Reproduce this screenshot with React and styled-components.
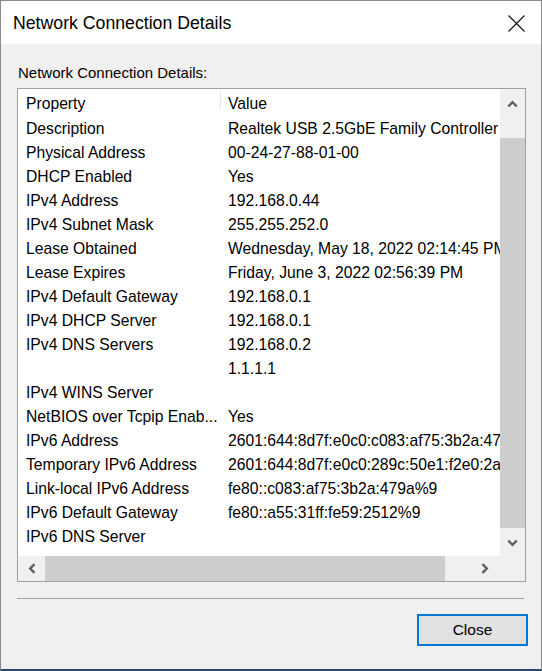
import React from 'react'
import styled, { createGlobalStyle } from 'styled-components'

const GlobalStyle = createGlobalStyle`
  html, body {
    margin: 0;
    padding: 0;
    background: #f0f0f0;
  }
  body {
    font-family: "Liberation Sans", Arial, sans-serif;
    color: #000;
  }
`

const rows = [
  ['Description', 'Realtek USB 2.5GbE Family Controller'],
  ['Physical Address', '00-24-27-88-01-00'],
  ['DHCP Enabled', 'Yes'],
  ['IPv4 Address', '192.168.0.44'],
  ['IPv4 Subnet Mask', '255.255.252.0'],
  ['Lease Obtained', 'Wednesday, May 18, 2022 02:14:45 PM'],
  ['Lease Expires', 'Friday, June 3, 2022 02:56:39 PM'],
  ['IPv4 Default Gateway', '192.168.0.1'],
  ['IPv4 DHCP Server', '192.168.0.1'],
  ['IPv4 DNS Servers', '192.168.0.2'],
  ['', '1.1.1.1'],
  ['IPv4 WINS Server', ''],
  ['NetBIOS over Tcpip Enab...', 'Yes'],
  ['IPv6 Address', '2601:644:8d7f:e0c0:c083:af75:3b2a:479a'],
  ['Temporary IPv6 Address', '2601:644:8d7f:e0c0:289c:50e1:f2e0:2a6c'],
  ['Link-local IPv6 Address', 'fe80::c083:af75:3b2a:479a%9'],
  ['IPv6 Default Gateway', 'fe80::a55:31ff:fe59:2512%9'],
  ['IPv6 DNS Server', ''],
]

const Chevron = ({ dir }) => {
  const paths = {
    up: 'M1.2 6.5 L5.5 2.2 L9.8 6.5',
    down: 'M1.2 1.5 L5.5 5.8 L9.8 1.5',
    left: 'M6.5 1.2 L2.2 5.5 L6.5 9.8',
    right: 'M1.5 1.2 L5.8 5.5 L1.5 9.8',
  }
  const vertical = dir === 'up' || dir === 'down'
  return (
    <svg width={vertical ? 11 : 8} height={vertical ? 8 : 11} viewBox={vertical ? '0 0 11 8' : '0 0 8 11'}>
      <path d={paths[dir]} fill="none" stroke="#606060" strokeWidth="2.4" />
    </svg>
  )
}

const App = () => {
  return (
    <>
      <GlobalStyle />
      <Window>
        <TitleBar>
          <Title>Network Connection Details</Title>
          <CloseX>
            <svg width="17" height="17" viewBox="0 0 17 17">
              <path d="M0.5 0.5 L16.5 16.5 M16.5 0.5 L0.5 16.5" stroke="#111" strokeWidth="1.1" />
            </svg>
          </CloseX>
        </TitleBar>
        <Body>
          <Label>Network Connection Details:</Label>
          <ListBox>
            <ListMain>
              <Content>
                <HeaderRow>
                  <HeaderCell $divider>Property</HeaderCell>
                  <HeaderCell>Value</HeaderCell>
                </HeaderRow>
                {rows.map(([k, v], i) => (
                  <Row key={i}>
                    <PropCell>{k}</PropCell>
                    <ValueCell>{v}</ValueCell>
                  </Row>
                ))}
              </Content>
              <VScroll>
                <ArrowButton $h={30}><Chevron dir="up" /></ArrowButton>
                <VTrack>
                  <VThumb />
                </VTrack>
                <ArrowButton $h={27}><Chevron dir="down" /></ArrowButton>
              </VScroll>
            </ListMain>
            <HScrollRow>
              <HScroll>
                <ArrowButton $w={27}><Chevron dir="left" /></ArrowButton>
                <HTrack>
                  <HThumb />
                </HTrack>
                <ArrowButton $w={30}><Chevron dir="right" /></ArrowButton>
              </HScroll>
              <Corner />
            </HScrollRow>
          </ListBox>
          <Separator />
          <ButtonRow>
            <Button>Close</Button>
          </ButtonRow>
        </Body>
      </Window>
    </>
  )
}

export default App

const Window = styled.div`
  width: 542px;
  height: 671px;
  box-sizing: border-box;
  border: 1px solid #8a8a8a;
  border-bottom: 2px solid #2b4a6b;
  display: flex;
  flex-direction: column;
  background: #f0f0f0;
  overflow: hidden;
`

const TitleBar = styled.div`
  height: 43px;
  flex: none;
  background: #fff;
  display: flex;
  align-items: center;
  justify-content: space-between;
  padding-left: 12px;
`

const Title = styled.div`
  font-size: 17.7px;
  line-height: 20px;
  margin-top: 1px;
`

const CloseX = styled.div`
  width: 47px;
  height: 43px;
  display: flex;
  align-items: center;
  justify-content: center;
  margin-right: 1px;
  margin-top: 1px;
`

const Body = styled.div`
  flex: 1;
  display: flex;
  flex-direction: column;
  padding: 0 15px 0 16px;
`

const Label = styled.div`
  margin-top: 20px;
  padding-left: 1px;
  font-size: 15px;
  line-height: 18px;
  height: 18px;
`

const ListBox = styled.div`
  margin-top: 6px;
  width: 509px;
  height: 494px;
  box-sizing: border-box;
  border: 1px solid #a0a0a0;
  background: #fff;
  display: flex;
  flex-direction: column;
`

const ListMain = styled.div`
  flex: 1;
  display: flex;
  min-height: 0;
`

const Content = styled.div`
  flex: 1;
  overflow: hidden;
  white-space: nowrap;
  font-size: 15.7px;
  padding-top: 1px;
`

const HeaderRow = styled.div`
  display: flex;
  height: 27px;
  align-items: center;
`

const HeaderCell = styled.div`
  position: relative;
  height: 100%;
  display: flex;
  align-items: center;
  width: ${p => (p.$divider ? '203px' : 'auto')};
  padding-left: ${p => (p.$divider ? '8px' : '7px')};
  box-sizing: border-box;
  flex: none;

  &::after {
    content: '';
    display: ${p => (p.$divider ? 'block' : 'none')};
    position: absolute;
    right: 0;
    top: 0;
    width: 1px;
    height: 18px;
    background: #e5e5e5;
  }
`

const Row = styled.div`
  display: flex;
  height: 24px;
  align-items: center;
`

const PropCell = styled.div`
  width: 203px;
  flex: none;
  box-sizing: border-box;
  padding-left: 8px;
  overflow: hidden;
`

const ValueCell = styled.div`
  flex: none;
  padding-left: 7px;
`

const VScroll = styled.div`
  width: 25px;
  flex: none;
  background: #f0f0f0;
  display: flex;
  flex-direction: column;
`

const ArrowButton = styled.div`
  flex: none;
  width: ${p => (p.$w ? `${p.$w}px` : '100%')};
  height: ${p => (p.$h ? `${p.$h}px` : '100%')};
  display: flex;
  align-items: center;
  justify-content: center;
`

const VTrack = styled.div`
  flex: 1;
  display: flex;
  flex-direction: column;
`

const VThumb = styled.div`
  margin-top: 19px;
  height: 390px;
  background: #cdcdcd;
`

const HScrollRow = styled.div`
  height: 25px;
  flex: none;
  display: flex;
`

const HScroll = styled.div`
  flex: 1;
  display: flex;
  background: #f0f0f0;
`

const HTrack = styled.div`
  flex: 1;
  display: flex;
`

const HThumb = styled.div`
  width: 400px;
  background: #cdcdcd;
`

const Corner = styled.div`
  width: 25px;
  background: #f0f0f0;
`

const Separator = styled.div`
  margin-top: 16px;
  width: 507px;
  height: 1px;
  background: #a0a0a0;
`

const ButtonRow = styled.div`
  display: flex;
  justify-content: flex-end;
  margin-top: 15px;
  margin-right: -2px;
`

const Button = styled.div`
  width: 111px;
  height: 32px;
  box-sizing: border-box;
  border: 2px solid #0078d7;
  background: #e1e1e1;
  display: flex;
  align-items: center;
  justify-content: center;
  font-size: 15.5px;
`
